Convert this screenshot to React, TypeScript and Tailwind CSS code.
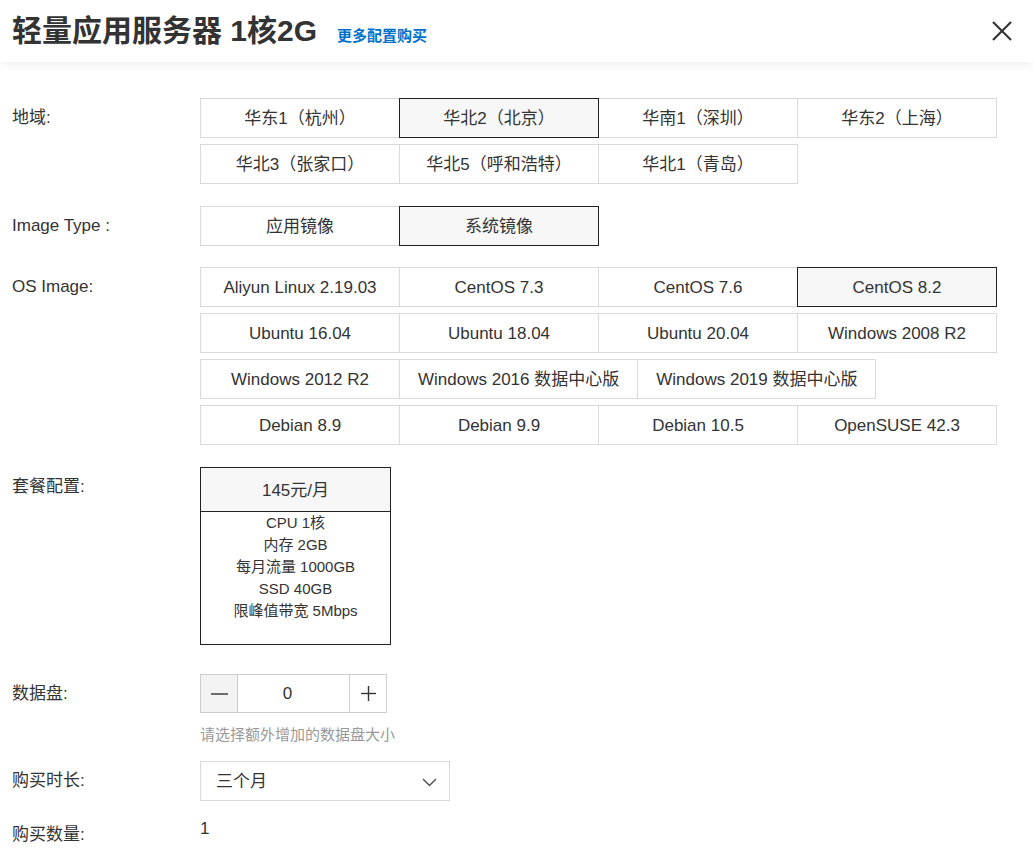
import React, { useState } from 'react';

const regions = [
    '华东1（杭州）',
    '华北2（北京）',
    '华南1（深圳）',
    '华东2（上海）',
    '华北3（张家口）',
    '华北5（呼和浩特）',
    '华北1（青岛）',
];

const imageTypes = ['应用镜像', '系统镜像'];

const osImages = [
    'Aliyun Linux 2.19.03',
    'CentOS 7.3',
    'CentOS 7.6',
    'CentOS 8.2',
    'Ubuntu 16.04',
    'Ubuntu 18.04',
    'Ubuntu 20.04',
    'Windows 2008 R2',
    'Windows 2012 R2',
    'Windows 2016 数据中心版',
    'Windows 2019 数据中心版',
    'Debian 8.9',
    'Debian 9.9',
    'Debian 10.5',
    'OpenSUSE 42.3',
];

const specs = ['CPU 1核', '内存 2GB', '每月流量 1000GB', 'SSD 40GB', '限峰值带宽 5Mbps'];

interface OptionGroupProps {
    items: string[];
    value: string;
    onChange: (v: string) => void;
}

const OptionGroup: React.FC<OptionGroupProps> = ({ items, value, onChange }) => {
    return (
        <div className="flex flex-wrap gap-y-[6px] w-[797px] pl-px">
            {items.map((item) => {
                const active = item === value;
                return (
                    <button
                        key={item}
                        onClick={() => onChange(item)}
                        className={`h-10 min-w-[200px] -ml-px px-[18px] pt-[2px] border text-[17px] text-[#333] whitespace-nowrap ${active
                            ? 'relative z-10 border-[#222] bg-[#f7f7f7]'
                            : 'border-[#d9d9d9] bg-white'
                            }`}
                    >
                        {item}
                    </button>
                );
            })}
        </div>
    );
};

const Label: React.FC<{ children: React.ReactNode }> = ({ children }) => (
    <div className="w-[188px] shrink-0 h-10 leading-10 text-[17px] text-[#333]">{children}</div>
);

export default function App() {
    const [region, setRegion] = useState('华北2（北京）');
    const [imageType, setImageType] = useState('系统镜像');
    const [os, setOs] = useState('CentOS 8.2');
    const [disk, setDisk] = useState(0);

    return (
        <div
            className="w-[1033px] min-h-[864px] bg-white text-[#333]"
            style={{ fontFamily: '"Liberation Sans", "Noto Sans CJK SC", Arial, sans-serif' }}
        >
            {/* Header */}
            <div className="relative z-10 h-[62px] flex items-center justify-between pl-3 pr-[21px] bg-white shadow-[0_3px_8px_rgba(0,0,0,0.06)]">
                <div className="flex items-baseline gap-5">
                    <h1 className="text-[30px] font-bold text-[#333] leading-9">轻量应用服务器 1核2G</h1>
                    <a className="text-[15px] font-semibold text-[#0070cc] cursor-pointer">更多配置购买</a>
                </div>
                <button className="w-5 h-5 text-[#333]">
                    <svg width="20" height="20" viewBox="0 0 20 20" fill="none" stroke="currentColor" strokeWidth="2.2">
                        <line x1="1" y1="1" x2="19" y2="19" />
                        <line x1="19" y1="1" x2="1" y2="19" />
                    </svg>
                </button>
            </div>

            {/* Form */}
            <div className="pt-9 pl-3">
                <div className="flex mb-[22px]">
                    <Label>地域:</Label>
                    <OptionGroup items={regions} value={region} onChange={setRegion} />
                </div>

                <div className="flex mb-[21px]">
                    <Label>Image Type :</Label>
                    <OptionGroup items={imageTypes} value={imageType} onChange={setImageType} />
                </div>

                <div className="flex mb-[22px]">
                    <Label>OS Image:</Label>
                    <OptionGroup items={osImages} value={os} onChange={setOs} />
                </div>

                <div className="flex mb-[29px]">
                    <Label>套餐配置:</Label>
                    <div className="w-[191px] border border-[#222] text-center">
                        <div className="h-[44px] leading-[46px] border-b border-[#222] bg-[#f7f7f7] text-[17px]">
                            145元/月
                        </div>
                        <div className="pb-[22px] text-[15px] leading-[22px] text-[#333]">
                            {specs.map((s) => (
                                <div key={s}>{s}</div>
                            ))}
                        </div>
                    </div>
                </div>

                <div className="flex mb-[16px]">
                    <Label>数据盘:</Label>
                    <div>
                        <div className="flex w-[187px] h-[39px] border border-[#ccc]">
                            <button
                                onClick={() => setDisk(Math.max(0, disk - 1))}
                                className="w-[37px] shrink-0 flex items-center justify-center bg-[#f3f3f3] border-r border-[#ccc] text-[#333]"
                            >
                                <svg width="17" height="2" viewBox="0 0 17 2">
                                    <line x1="0" y1="1" x2="17" y2="1" stroke="currentColor" strokeWidth="1.4" />
                                </svg>
                            </button>
                            <div className="flex-1 flex items-center justify-center pr-[12px] text-[17px] text-[#333]">
                                {disk}
                            </div>
                            <button
                                onClick={() => setDisk(disk + 1)}
                                className="w-[37px] shrink-0 flex items-center justify-center border-l border-[#ccc] text-[#333]"
                            >
                                <svg width="15" height="15" viewBox="0 0 15 15">
                                    <line x1="0" y1="7.5" x2="15" y2="7.5" stroke="currentColor" strokeWidth="1.4" />
                                    <line x1="7.5" y1="0" x2="7.5" y2="15" stroke="currentColor" strokeWidth="1.4" />
                                </svg>
                            </button>
                        </div>
                        <div className="mt-[12px] text-[15px] leading-5 text-[#999]">请选择额外增加的数据盘大小</div>
                    </div>
                </div>

                <div className="flex mb-[14px]">
                    <Label>购买时长:</Label>
                    <div className="w-[250px] h-10 border border-[#d9d9d9] flex items-center justify-between pl-[15px] pr-[12px] pt-[2px] text-[17px] text-[#333]">
                        <span>三个月</span>
                        <svg width="15" height="9" viewBox="0 0 15 9" fill="none" stroke="#555" strokeWidth="1.5">
                            <polyline points="1,1 7.5,7.5 14,1" />
                        </svg>
                    </div>
                </div>

                <div className="flex">
                    <Label>购买数量:</Label>
                    <div className="leading-[28px] text-[17px] text-[#333]">1</div>
                </div>
            </div>
        </div>
    );
}
